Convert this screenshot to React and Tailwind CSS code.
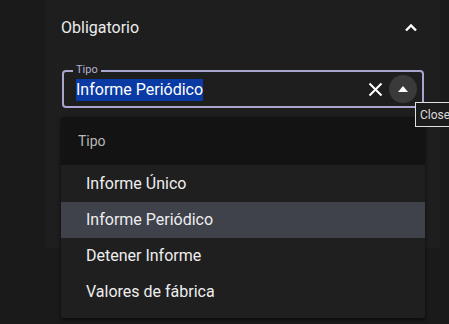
export default function App() {
  const items = ["Informe Único", "Informe Periódico", "Detener Informe", "Valores de fábrica"];
  return (
    <div
      className="relative w-[449px] h-[324px] overflow-hidden bg-[#1a1a1a]"
      style={{ fontFamily: "Roboto, 'Noto Sans', sans-serif" }}
    >
      <div className="ml-[45px] w-[395px] h-[248px] bg-[#1e1e1e] pl-4 pr-4 flex flex-col">
        <div className="h-[55px] flex items-center justify-between">
          <span className="text-[16px] text-[#ececec] leading-none">Obligatorio</span>
          <svg width="14" height="10" viewBox="0 0 14 10" className="mr-[6px]">
            <path d="M2 7.5 L7 2.5 L12 7.5" fill="none" stroke="#fff" strokeWidth="2.4" />
          </svg>
        </div>
        <div className="relative mt-[15px] ml-px h-[38px] w-[362px] rounded-[4px] border-2 border-[#a8a6cf] flex items-center pl-[12px] pr-[5px]">
          <span className="absolute -top-[8px] left-[9px] px-[3px] bg-[#1e1e1e] text-[11px] leading-[12px] text-[#b4b2d2]">
            Tipo
          </span>
          <span className="bg-[#0a3aa4] text-[16px] leading-[22px] text-white mt-[2px]">Informe Periódico</span>
          <div className="flex-1" />
          <svg width="15" height="15" viewBox="0 0 15 15" className="mr-[6px] mt-[1px]">
            <path d="M1.5 1.5 L13.5 13.5 M13.5 1.5 L1.5 13.5" stroke="#fff" strokeWidth="2" />
          </svg>
          <div className="w-[28px] h-[28px] rounded-full bg-[#3a3a3a] flex items-center justify-center">
            <svg width="10" height="6" viewBox="0 0 10 6">
              <path d="M0 6 L5 0 L10 6 Z" fill="#fff" />
            </svg>
          </div>
        </div>
      </div>

      <div className="absolute left-[61px] top-[117px] w-[364px] h-[201px] bg-[#1f1f1f] shadow-[0_2px_4px_rgba(0,0,0,0.6)] rounded-b-[3px] flex flex-col">
        <div className="h-[48px] bg-[#131313] flex items-center pl-[17px] text-[14px] text-[#b8b8b8]">Tipo</div>
        <div className="flex flex-col pt-px">
          {items.map((t, i) => (
            <div
              key={t}
              className={
                i === 1
                  ? "h-[36px] flex items-center pl-[25px] text-[16px] text-[#eeeeee] bg-[#3f414b]"
                  : "h-[36px] flex items-center pl-[25px] text-[16px] text-[#eeeeee]"
              }
            >
              {t}
            </div>
          ))}
        </div>
      </div>

      <div className="absolute left-[415px] top-[102px] h-[25px] px-[4px] border border-[#e0e0e0] bg-[#1c1c1c] flex items-center text-[12px] text-[#dddddd] whitespace-nowrap">
        Close
      </div>
    </div>
  );
}
